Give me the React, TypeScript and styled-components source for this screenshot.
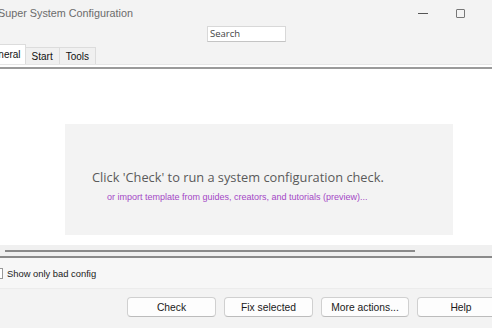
import styled, { createGlobalStyle } from "styled-components"

const Global = createGlobalStyle`
  html, body { margin: 0; padding: 0; background: #f3f3f3; overflow: hidden; }
  body { font-family: "Open Sans", "Noto Sans", sans-serif; }
`

// the window is scrolled a little off the left edge of the screen
const Window = styled.div`
  width: 512px;
  height: 328px;
  margin-left: -20px;
  background: #f3f3f3;
  display: flex;
  flex-direction: column;
`

const TitleBar = styled.div`
  height: 26px;
  display: flex;
  align-items: center;
  justify-content: space-between;
  padding-left: 18px;
`

const Title = styled.div`
  font-family: "Liberation Sans", Arial, sans-serif;
  font-size: 10.8px;
  color: #6b6b6b;
`

const Controls = styled.div`
  display: flex;
  align-items: center;
  gap: 28px;
  padding-right: 27px;
`

const MinIcon = styled.svg`
  display: block;
  flex: none;
`

const MaxIcon = styled.div`
  width: 7px;
  height: 7px;
  border: 1px solid #777;
  border-radius: 1px;
`

const SearchRow = styled.div`
  display: flex;
  padding-left: 227px;
  height: 19px;
`

const SearchBox = styled.div`
  width: 75px;
  height: 14px;
  background: #fff;
  border: 1px solid #d8d8d8;
  border-bottom-color: #c4c4c4;
  font-size: 9.5px;
  color: #444;
  padding-left: 2px;
  line-height: 14px;
`

const TabBar = styled.div`
  display: flex;
  align-items: flex-end;
  height: 19px;
  border-bottom: 1px solid #e6e6e6;
`

const Tab = styled.div<{ $active?: boolean }>`
  height: ${p => (p.$active ? 19 : 16)}px;
  padding: 0 ${p => (p.$active ? 4 : 6)}px;
  font-family: "Liberation Sans", Arial, sans-serif;
  font-size: 10px;
  color: #111;
  display: flex;
  align-items: center;
  background: ${p => (p.$active ? "#fff" : "#f0f0f0")};
  border: 1px solid #dcdcdc;
  border-bottom: none;
  margin-left: ${p => (p.$active ? 0 : -1)}px;
`

const Divider = styled.div`
  height: 2px;
  background: #fff;
  border-bottom: 2px solid #9a9a9a;
`

const Content = styled.div`
  height: 176px;
  background: #fff;
  display: flex;
  align-items: flex-end;
  padding: 0 0 10px 85px;
  box-sizing: border-box;
`

const Panel = styled.div`
  width: 388px;
  height: 111px;
  background: #f3f3f3;
  display: flex;
  flex-direction: column;
  justify-content: center;
  padding-top: 10px;
  box-sizing: border-box;
`

const Lead = styled.div`
  font-size: 12.8px;
  color: #5a5a5a;
  padding-left: 27px;
`

const Sub = styled.div`
  font-family: "Liberation Sans", Arial, sans-serif;
  font-size: 9px;
  color: #a447c6;
  padding-left: 42px;
  margin-top: 6px;
`

const ScrollTrack = styled.div`
  height: 11px;
  background: #f0f0f0;
  display: flex;
  align-items: center;
  padding-left: 25px;
  border-bottom: 2px solid #8a8a8a;
`

const Thumb = styled.div`
  width: 410px;
  height: 2px;
  background: #8a8a8a;
`

const OptionRow = styled.div`
  height: 30px;
  display: flex;
  align-items: center;
  gap: 4px;
  padding-left: 12px;
  background: #f7f7f7;
  border-bottom: 1px solid #ececec;
`

const Check = styled.div`
  width: 9px;
  height: 9px;
  border: 1px solid #999;
  background: #fff;
`

const Label = styled.span`
  font-family: "Liberation Sans", Arial, sans-serif;
  font-size: 9.4px;
  color: #222;
`

const Buttons = styled.div`
  flex: 1;
  display: flex;
  align-items: flex-start;
  padding: 8px 0 0 147px;
  gap: 8px;
`

const Button = styled.button<{ $w?: number }>`
  width: ${p => p.$w ?? 89}px;
  height: 20px;
  background: #fdfdfd;
  border: 1px solid #d0d0d0;
  border-bottom-color: #bcbcbc;
  border-radius: 4px;
  font-family: "Liberation Sans", Arial, sans-serif;
  font-size: 10.3px;
  color: #1a1a1a;
  padding: 0;
  flex: none;
`

export default function App() {
  return (
    <>
      <Global />
      <Window>
        <TitleBar>
          <Title>Super System Configuration</Title>
          <Controls>
            <MinIcon width="10" height="3" viewBox="0 0 10 3">
              <rect x="0" y="1" width="10" height="1" fill="#555" />
            </MinIcon>
            <MaxIcon />
          </Controls>
        </TitleBar>
        <SearchRow>
          <SearchBox>Search</SearchBox>
        </SearchRow>
        <TabBar>
          <Tab $active>General</Tab>
          <Tab>Start</Tab>
          <Tab>Tools</Tab>
        </TabBar>
        <Divider />
        <Content>
          <Panel>
            <Lead>Click 'Check' to run a system configuration check.</Lead>
            <Sub>or import template from guides, creators, and tutorials (preview)...</Sub>
          </Panel>
        </Content>
        <ScrollTrack>
          <Thumb />
        </ScrollTrack>
        <OptionRow>
          <Check />
          <Label>Show only bad config</Label>
        </OptionRow>
        <Buttons>
          <Button>Check</Button>
          <Button>Fix selected</Button>
          <Button $w={88}>More actions...</Button>
          <Button $w={88}>Help</Button>
        </Buttons>
      </Window>
    </>
  )
}
